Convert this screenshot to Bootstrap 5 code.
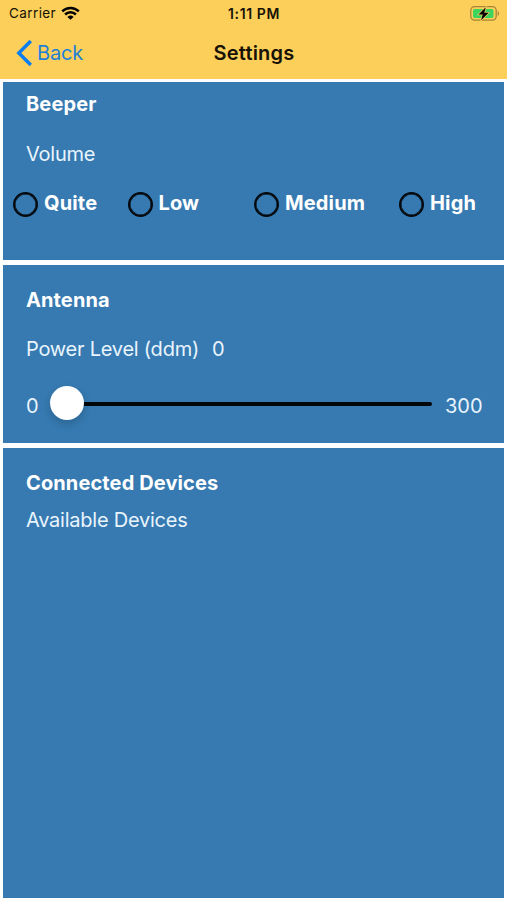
<!DOCTYPE html>
<html lang="en">
<head>
<meta charset="utf-8">
<meta name="viewport" content="width=device-width, initial-scale=1">
<title>Settings</title>
<link href="https://cdn.jsdelivr.net/npm/bootstrap@5.3.0/dist/css/bootstrap.min.css" rel="stylesheet">
<style>
body{font-family:Inter,"Liberation Sans",sans-serif;font-size:20px;line-height:24px;height:900px;background:#fff;overflow:hidden}
.app-head{background:#fbcf59;height:79px;color:#171206}
.status{height:27px;font-size:13.5px;line-height:27px;padding:0 6px 0 9px}
.status>div,.titlebar>div{flex:1 1 0}
.status svg,.titlebar svg{display:block}
.titlebar{height:51px;padding:0 16px}
.back{color:#1f80d8;text-decoration:none;line-height:24px}
.back span{letter-spacing:-.2px;margin-left:-1px}
.panels{padding:3px 3px 2.5px;gap:5px;height:821px}
.panel{background:#367ab1;color:#fff;padding-left:23px;padding-right:20px;flex-shrink:0}
.p-fixed{height:178px}
.head{font-weight:700;letter-spacing:.12px}
.soft{color:#e9f4fd;letter-spacing:-.24px}
.beeper-head{padding-top:10px}
.volume{padding-top:25.5px}
.antenna-head{padding-top:22.5px}
.power{padding-top:25px;gap:13px}
.slide-row{margin-top:25px}
.slide-row span{padding-top:5px;letter-spacing:0;flex:none}
.min-label{width:24px}
.max-label{margin-left:13px}
.conn-head{padding-top:23px}
.avail{padding-top:13px}
.volumes{margin:25px 0 0 -13px;height:26px}
.ring{appearance:none;width:25px;height:25px;border:2.5px solid #05090d;box-shadow:inset 0 0 0 .5px #05090d;border-radius:50%;margin:1px 6px 0 0;flex:none}
.opt{display:flex;height:26px;line-height:24px;font-weight:700;letter-spacing:.15px}
.o1{width:114.5px}.o2{width:126.5px}.o3{width:145px}
.slider{appearance:none;width:382px;height:34px;margin:1px 0 0;background:transparent;flex:none}
.slider::-webkit-slider-runnable-track{height:4px;border-radius:2px;background:#04070a}
.slider::-webkit-slider-thumb{appearance:none;width:34px;height:34px;margin-top:-16px;border-radius:50%;background:#fff;box-shadow:0 4px 8px rgba(0,0,0,.18)}
.t-carrier{letter-spacing:.4px;margin-right:5px}
.t-time{letter-spacing:.6px;font-size:14px;margin-right:2px}
.t-title{letter-spacing:.2px;margin-right:-1px}
</style>
</head>
<body class="d-flex flex-column">
<header class="app-head">
  <div class="status d-flex align-items-center">
    <div class="d-flex align-items-center"><span class="t-carrier">Carrier</span>
      <svg width="19" height="15" viewBox="0 0 19 15" fill="none" stroke="#000" stroke-width="2.5"><path d="M1.2 5.4C5.8.8 13.2.8 17.8 5.4M4.1 8.5c3-3 7.8-3 10.8 0"/><path d="M9.5 13.8 6.4 10.9q3.1-2.7 6.2 0Z" fill="#000" stroke="none"/></svg></div>
    <span class="t-time fw-semibold">1:11 PM</span>
    <div class="d-flex justify-content-end">
      <svg width="31" height="16" viewBox="0 0 31 16"><rect x=".8" y=".7" width="25.4" height="13.4" rx="3.8" fill="none" stroke="#a58538" stroke-width="1.3"/><path d="M27.7 5c1.9.9 1.9 4.1 0 5Z" fill="#a58538"/><rect x="3" y="3" width="20.5" height="9" rx="1.8" fill="#3bd45f"/><path d="M15.8 1.3 8.5 8.5h4.2l-1.6 5.7L18.6 6.8h-4.4Z" fill="#000" stroke="#fbcf59" stroke-width="1.3" paint-order="stroke"/></svg>
    </div>
  </div>
  <nav class="titlebar d-flex align-items-center">
    <div class="d-flex"><a class="back d-flex align-items-center" href="#"><svg width="22" height="28" viewBox="0 0 22 28" fill="none" stroke="#087cf0" stroke-width="3.4"><path d="M14.8 2 2.8 14 14.8 26"/></svg><span>Back</span></a></div>
    <span class="t-title fw-semibold">Settings</span>
    <div></div>
  </nav>
</header>
<main class="panels d-flex flex-column">
  <section class="panel p-fixed">
    <div class="head beeper-head">Beeper</div>
    <div class="soft volume">Volume</div>
    <div class="volumes d-flex">
      <label class="opt o1"><input class="ring" type="radio" name="vol"><span>Quite</span></label>
      <label class="opt o2"><input class="ring" type="radio" name="vol"><span>Low</span></label>
      <label class="opt o3"><input class="ring" type="radio" name="vol"><span>Medium</span></label>
      <label class="opt"><input class="ring" type="radio" name="vol"><span>High</span></label>
    </div>
  </section>
  <section class="panel p-fixed">
    <div class="head antenna-head">Antenna</div>
    <div class="soft power d-flex"><span>Power Level (ddm)</span><span>0</span></div>
    <div class="soft slide-row d-flex align-items-center"><span class="min-label">0</span><input class="slider" type="range" min="0" max="300" value="0"><span class="max-label">300</span></div>
  </section>
  <section class="panel flex-grow-1">
    <div class="head conn-head">Connected Devices</div>
    <div class="soft avail">Available Devices</div>
  </section>
</main>
<script src="https://cdn.jsdelivr.net/npm/bootstrap@5.3.0/dist/js/bootstrap.bundle.min.js"></script>
</body>
</html>
